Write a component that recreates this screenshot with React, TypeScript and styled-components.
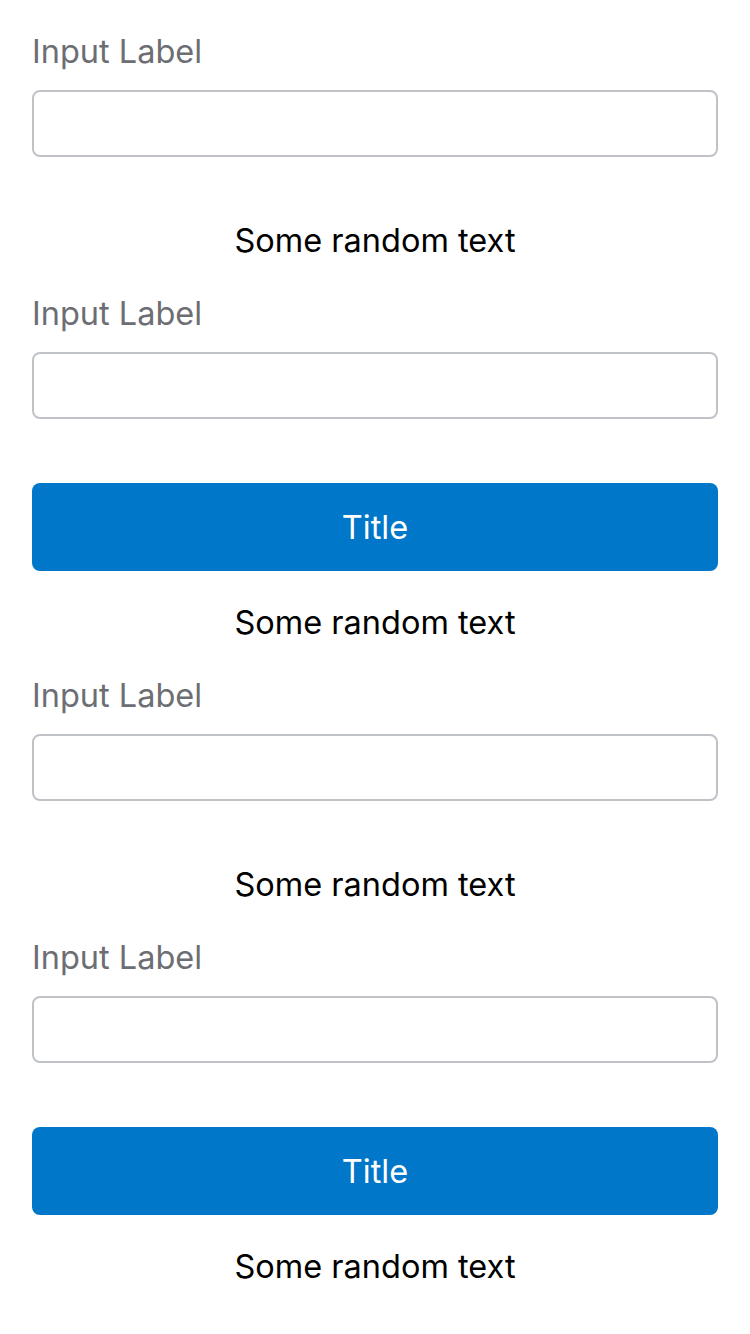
import React from "react";
import styled, { createGlobalStyle } from "styled-components";

const Global = createGlobalStyle`
  html, body { margin: 0; padding: 0; background: #ffffff; }
  body { font-family: Inter, "Open Sans", "Liberation Sans", sans-serif; }
`;

const Page = styled.div`
  display: flex;
  flex-direction: column;
  padding: 32px 32px 0 32px;
  width: 750px;
  box-sizing: border-box;
`;

const Field = styled.div`
  display: flex;
  flex-direction: column;
  gap: 18px;
  margin-bottom: 64px;
`;

const Label = styled.label`
  font-size: 32.5px;
  line-height: 40px;
  color: #6d6e73;
  font-weight: 400;
`;

const Input = styled.input`
  box-sizing: border-box;
  width: 100%;
  height: 67px;
  border: 2px solid #bfc2c7;
  border-radius: 8px;
  background: #fff;
  font-size: 30px;
  padding: 0 16px;
  outline: none;
`;

const Text = styled.div`
  font-size: 32.5px;
  line-height: 40px;
  color: #000;
  text-align: center;
  margin-bottom: 33px;
`;

const Button = styled.button`
  box-sizing: border-box;
  width: 100%;
  height: 88px;
  border: none;
  border-radius: 8px;
  background: #0077c8;
  color: #fff;
  font-family: inherit;
  font-size: 32.5px;
  margin-bottom: 32px;
  cursor: pointer;
`;

const Block = () => (
  <>
    <Field>
      <Label>Input Label</Label>
      <Input />
    </Field>
    <Text>Some random text</Text>
    <Field>
      <Label>Input Label</Label>
      <Input />
    </Field>
    <Button>Title</Button>
    <Text>Some random text</Text>
  </>
);

export default function App() {
  return (
    <>
      <Global />
      <Page>
        <Block />
        <Block />
      </Page>
    </>
  );
}
